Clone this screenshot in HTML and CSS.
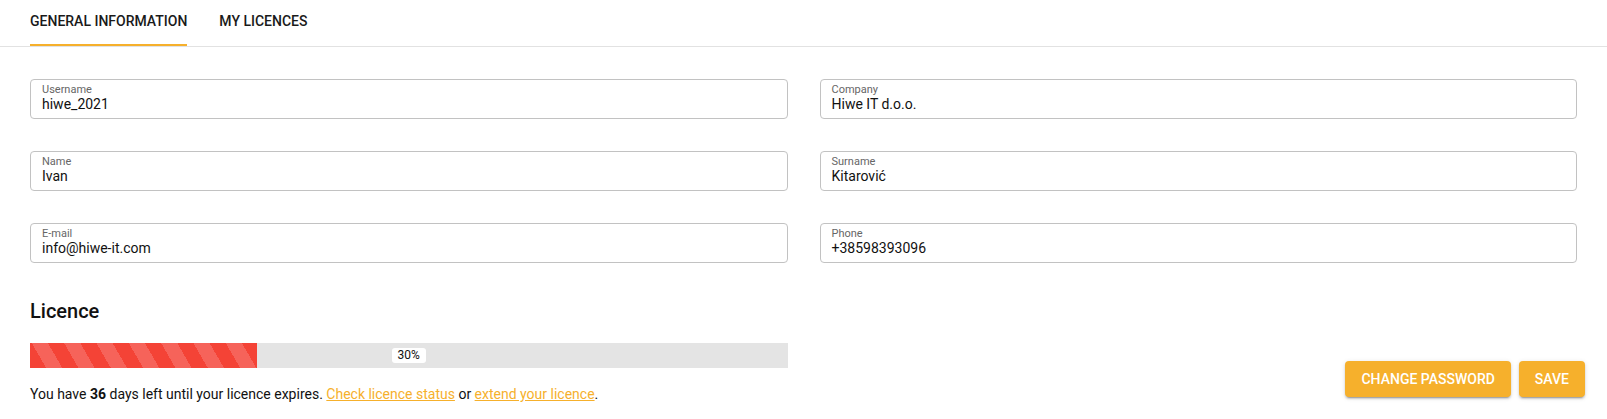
FILE: index.html
```html
<!DOCTYPE html>
<html lang="en">
<head>
<meta charset="utf-8">
<title>Profile</title>
<link rel="stylesheet" href="styles.css">
</head>
<body>
<div class="tabs">
  <div class="tab active">General information</div>
  <div class="tab">My licences</div>
</div>
<div class="content">
  <div class="form">
    <div class="field"><div class="label">Username</div><div class="value">hiwe_2021</div></div>
    <div class="field"><div class="label">Company</div><div class="value">Hiwe IT d.o.o.</div></div>
    <div class="field"><div class="label">Name</div><div class="value">Ivan</div></div>
    <div class="field"><div class="label">Surname</div><div class="value">Kitarović</div></div>
    <div class="field"><div class="label">E-mail</div><div class="value">info@hiwe-it.com</div></div>
    <div class="field"><div class="label">Phone</div><div class="value">+38598393096</div></div>
  </div>
  <div class="bottom">
    <div class="licence">
      <h2 class="heading">Licence</h2>
      <div class="bar">
        <div class="fill" style="width:30%"></div>
        <span class="pct">30%</span>
      </div>
      <p class="note">You have <b>36</b> days left until your licence expires. <a href="#">Check licence status</a> or <a href="#">extend your licence</a>.</p>
    </div>
    <div class="actions">
      <button class="btn">Change password</button>
      <button class="btn">Save</button>
    </div>
  </div>
</div>
</body>
</html>
```
FILE: styles.css
```css
* { box-sizing: border-box; }
body {
  margin: 0;
  font-family: Roboto, "Noto Sans", Arial, sans-serif;
  color: #1a1a1a;
  background: #fff;
}
.tabs {
  display: flex;
  padding-left: 30px;
  border-bottom: 1px solid #e2e2e2;
}
.tab {
  height: 46px;
  padding-top: 13px;
  margin-right: 32px;
  font-size: 14px;
  font-weight: 500;
  line-height: 16px;
  text-transform: uppercase;
  color: #1a1a1a;
  border-bottom: 2px solid transparent;
}
.tab.active { border-bottom-color: #f6b02c; }
.content { padding: 32px 30px 0 30px; }
.form {
  display: grid;
  grid-template-columns: 1fr 1fr;
  column-gap: 32px;
  row-gap: 32px;
}
.field {
  height: 40px;
  border: 1px solid #c2c2c2;
  border-radius: 4px;
  padding: 3px 11px 0 11px;
}
.label {
  font-size: 11px;
  line-height: 13px;
  color: #666;
}
.value {
  font-size: 14px;
  line-height: 16px;
  color: #111;
}
.bottom {
  display: flex;
  justify-content: space-between;
  align-items: flex-end;
}
.licence { width: calc((100% - 32px) / 2); }
.heading {
  margin: 36px 0 20px 0;
  font-size: 20px;
  line-height: 24px;
  font-weight: 500;
  color: #111;
}
.bar {
  position: relative;
  height: 25px;
  background: #e4e4e4;
}
.fill {
  height: 100%;
  background: repeating-linear-gradient(60deg, #f44336 0 14px, #f6635a 14px 28px);
}
.pct {
  position: absolute;
  left: 50%;
  top: 5px;
  transform: translateX(-50%);
  width: 34px;
  height: 15px;
  background: #fff;
  border-radius: 3px;
  font-size: 12px;
  line-height: 15px;
  text-align: center;
  color: #111;
}
.note {
  margin: 16px 0 0 0;
  font-size: 14px;
  line-height: 20px;
  color: #111;
}
.note b { font-weight: 700; }
.note a { color: #f6b02c; text-decoration: underline; }
.actions {
  display: flex;
  gap: 8px;
  margin-right: -8px;
  margin-bottom: 7px;
}
.btn {
  height: 36px;
  padding: 0 16px;
  border: none;
  border-radius: 4px;
  background: #f6b02c;
  color: #fff;
  font-family: Roboto, "Noto Sans", Arial, sans-serif;
  font-size: 14px;
  font-weight: 500;
  text-transform: uppercase;
  box-shadow: 0 3px 1px -2px rgba(0,0,0,.2), 0 2px 2px 0 rgba(0,0,0,.14), 0 1px 5px 0 rgba(0,0,0,.12);
  cursor: pointer;
}
```
